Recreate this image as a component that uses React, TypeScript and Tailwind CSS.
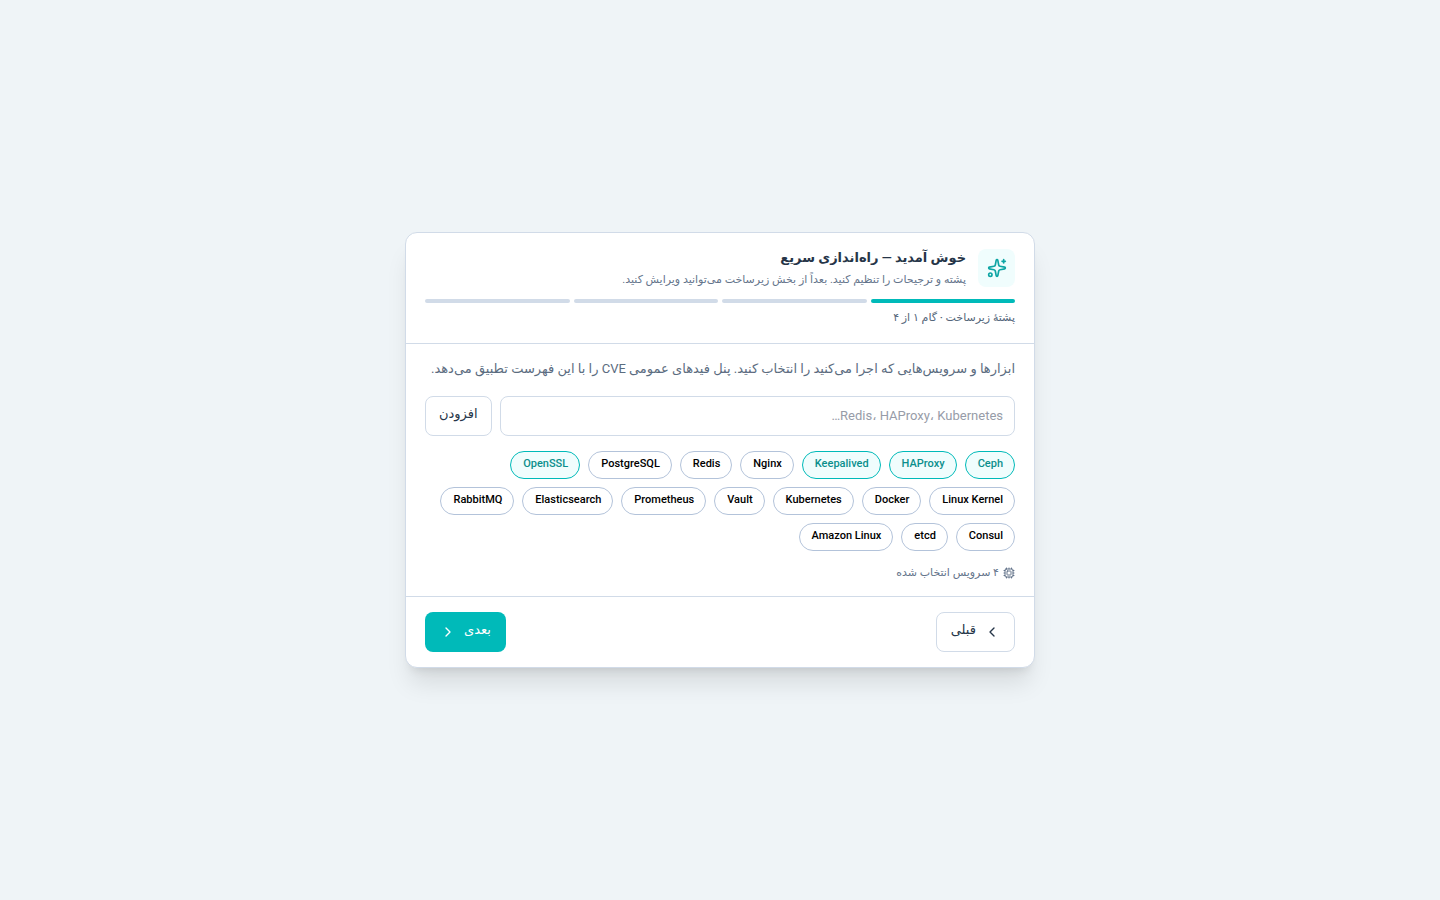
import { useState } from "react";
import { ChevronLeft, ChevronRight, Cpu, Sparkles } from "lucide-react";

const SERVICES = [
  "Ceph", "HAProxy", "Keepalived", "Nginx", "Redis", "PostgreSQL", "OpenSSL",
  "Linux Kernel", "Docker", "Kubernetes", "Vault", "Prometheus", "Elasticsearch",
  "RabbitMQ", "Consul", "etcd", "Amazon Linux",
];

const STEPS = [1, 2, 3, 4];

function App() {
  const [services, setServices] = useState<string[]>(SERVICES);
  const [selected, setSelected] = useState<string[]>(["Ceph", "HAProxy", "Keepalived", "OpenSSL"]);
  const [draft, setDraft] = useState("");
  const step = 1;

  function toggle(name: string) {
    setSelected((prev) => (prev.includes(name) ? prev.filter((s) => s !== name) : [...prev, name]));
  }

  function addService() {
    const name = draft.trim();
    if (!name) return;
    if (!services.includes(name)) setServices([...services, name]);
    if (!selected.includes(name)) setSelected([...selected, name]);
    setDraft("");
  }

  return (
    <main
      dir="rtl"
      lang="fa"
      className="flex min-h-screen items-center justify-center bg-[#eff4f7] p-4 font-['Roboto','DejaVu_Sans',sans-serif] text-[#263548]"
    >
      <section className="w-full max-w-[630px] rounded-xl border border-[#d1dbe8] bg-white shadow-xl">
        <header className="border-b border-[#d1dbe8] px-[19px] pt-4 pb-[17px]">
          <div className="flex items-start gap-3">
            <div className="flex h-[38px] w-[37px] shrink-0 items-center justify-center rounded-lg bg-[#f0fdfd] text-[#0ea5a4]">
              <Sparkles size={20} />
            </div>
            <div>
              <h1 className="text-[13px] leading-[18px] font-bold">خوش آمدید — راه‌اندازی سریع</h1>
              <p className="mt-1 text-[11px] leading-[18px] text-[#64748b]">
                پشته و ترجیحات را تنظیم کنید. بعداً از بخش زیرساخت می‌توانید ویرایش کنید.
              </p>
            </div>
          </div>
          <div className="mt-[10px] flex gap-1">
            {STEPS.map((s) => (
              <div key={s} className={s <= step ? "h-1 flex-1 rounded-full bg-[#00bab9]" : "h-1 flex-1 rounded-full bg-[#d1dbe8]"} />
            ))}
          </div>
          <p className="mt-[7px] text-[11px] leading-4 font-medium text-[#536579]">پشتهٔ زیرساخت · گام ۱ از ۴</p>
        </header>

        <div className="px-[19px] py-[15px]">
          <p className="text-[13px] leading-5 text-[#5b6c80]">
            ابزارها و سرویس‌هایی که اجرا می‌کنید را انتخاب کنید. پنل فیدهای عمومی CVE را با این فهرست تطبیق می‌دهد.
          </p>
          <div className="mt-[17px] flex gap-2">
            <input
              type="text"
              aria-label="نام سرویس"
              value={draft}
              onChange={(e) => setDraft(e.target.value)}
              placeholder="Redis، HAProxy، Kubernetes…"
              className="h-10 min-w-0 flex-1 rounded-lg border border-[#d1dbe8] px-[11px] pb-0.5 text-[13px] placeholder:text-[#979ca8]"
            />
            <button
              onClick={addService}
              className="h-10 rounded-lg border border-[#d1dbe8] px-[13px] pb-1 text-[13px] font-medium"
            >
              افزودن
            </button>
          </div>
          <div className="mt-[15px] flex flex-wrap gap-2">
            {services.map((name) => (
              <button
                key={name}
                onClick={() => toggle(name)}
                aria-pressed={selected.includes(name)}
                className={
                  selected.includes(name)
                    ? "h-7 rounded-full border border-[#00bab9] bg-[#f0fdfd] ps-[11px] pe-3 pb-0.5 text-[11px] font-medium text-[#0b8f8c]"
                    : "h-7 rounded-full border border-[#b3c3da] ps-[11px] pe-3 pb-0.5 text-[11px] font-medium text-black"
                }
              >
                {name}
              </button>
            ))}
          </div>
          <p className="mt-[14px] flex items-center gap-1 text-[11px] leading-4 text-[#64748b]">
            <Cpu size={12} />
            {selected.length.toLocaleString("fa")} سرویس انتخاب شده
          </p>
        </div>

        <footer className="flex justify-between border-t border-[#d1dbe8] px-[19px] py-[15px]">
          <button className="flex h-10 items-center gap-2 rounded-lg border border-[#d1dbe8] px-[14px] text-[13px] font-medium">
            <ChevronLeft size={16} />
            <span className="pb-1">قبلی</span>
          </button>
          <button className="flex h-10 items-center gap-2 rounded-lg bg-[#00bab9] px-[15px] text-[13px] font-medium text-white">
            <span className="pb-1">بعدی</span>
            <ChevronRight size={16} />
          </button>
        </footer>
      </section>
    </main>
  );
}

export default App;
